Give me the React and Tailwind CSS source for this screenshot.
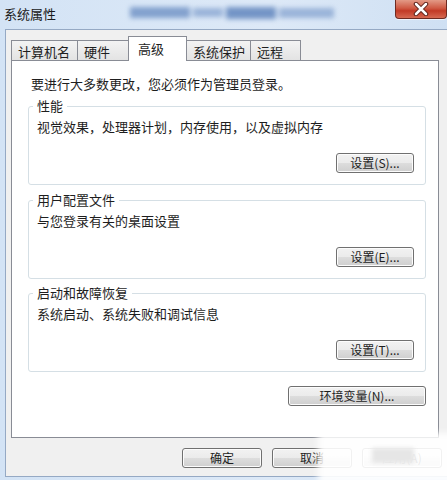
import React from "react";

const btn =
  "h-[20px] rounded-[3px] border border-[#707070] bg-[linear-gradient(#f2f2f2_0%,#ebebeb_50%,#dddddd_51%,#cfcfcf_100%)] shadow-[inset_0_0_0_1px_#fcfcfc] text-[12px] leading-[18px] text-[#1e1e1e] flex items-center justify-center";

function Group({ title, desc, button }) {
  return (
    <fieldset className="mx-[12px] ml-[16px] border border-[#d5dfe5] rounded-[3px] pl-[8px] pr-[11px] pb-[11px]">
      <legend className="px-[4px] -ml-[4px] leading-[16px]">{title}</legend>
      <div className="mt-[5px] leading-[16px]">{desc}</div>
      <div className="mt-[18px] flex justify-end">
        <div className={btn + " w-[78px]"}>{button}</div>
      </div>
    </fieldset>
  );
}

export default function App() {
  const tabs = [
    { label: "计算机名", w: "w-[67px]" },
    { label: "硬件", w: "w-[52px] -ml-px" },
    { label: "高级", w: "w-[59px] -ml-px", active: true },
    { label: "系统保护", w: "w-[65px] -ml-px" },
    { label: "远程", w: "w-[51px] -ml-px" },
  ];

  return (
    <div className="w-[447px] h-[480px] relative overflow-hidden bg-[linear-gradient(90deg,#d3e3f5,#dde9f7_60%,#cfe0f3)] text-[13px] text-[#1e1e1e] font-['Noto_Sans_CJK_SC',sans-serif]">
      {/* Title bar */}
      <div className="h-[29px] flex items-start">
        <span className="ml-[4px] mt-[5px] leading-[18px] text-[13px] text-[#1a1a1a]">系统属性</span>
        {/* blurred caption */}
        <div className="ml-[74px] mt-[5px] w-[208px] h-[15px] flex items-center gap-[3px] blur-[2.5px] opacity-80">
          <div className="w-[60px] h-[11px] bg-[#6d90c4]" />
          <div className="w-[30px] h-[9px] bg-[#8aa7d2]" />
          <div className="w-[50px] h-[12px] bg-[#5a80ba]" />
          <div className="w-[55px] h-[10px] bg-[#8aa7d2]" />
        </div>
        <div className="ml-auto w-[52px] h-[19px] rounded-b-[4px] border border-t-0 border-[#6e2b22] bg-[linear-gradient(#e39a86,#cf5a44_45%,#c23a26_60%,#d66a52)] flex items-center justify-center shadow-[0_1px_0_#ffffff99]">
          <svg width="16" height="14" viewBox="0 0 16 14">
            <path d="M3 2 L13 12 M13 2 L3 12" stroke="#5a2018" strokeWidth="4.5" strokeLinecap="round" />
            <path d="M3 2 L13 12 M13 2 L3 12" stroke="#ffffff" strokeWidth="2.5" strokeLinecap="round" />
          </svg>
        </div>
      </div>

      {/* Client area */}
      <div className="ml-[5px] h-[448px] bg-[#f0f0f0] border-l border-t border-b border-[#95a9c4] flex flex-col">
        {/* Tabs */}
        <div className="mt-[6px] pl-[5px] flex items-end relative z-10 -mb-px">
          {tabs.map((t) =>
            t.active ? (
              <div
                key={t.label}
                className={t.w + " h-[25px] bg-white border border-b-0 border-[#898c95] pl-[9px] flex items-center leading-[16px]"}
              >
                {t.label}
              </div>
            ) : (
              <div
                key={t.label}
                className={t.w + " h-[21px] bg-[linear-gradient(#f3f3f3,#e3e3e3)] border border-[#898c95] pl-[6px] pt-[2px] flex items-center leading-[16px]"}
              >
                {t.label}
              </div>
            )
          )}
        </div>

        {/* Panel */}
        <div className="ml-[5px] w-[428px] h-[378px] bg-white border border-[#898c95] flex flex-col">
          <div className="pt-[15px] pl-[19px] leading-[16px]">要进行大多数更改，您必须作为管理员登录。</div>
          <div className="mt-[6px]">
            <Group title="性能" desc="视觉效果，处理器计划，内存使用，以及虚拟内存" button="设置(S)..." />
          </div>
          <div className="mt-[7px]">
            <Group title="用户配置文件" desc="与您登录有关的桌面设置" button="设置(E)..." />
          </div>
          <div className="mt-[6px]">
            <Group title="启动和故障恢复" desc="系统启动、系统失败和调试信息" button="设置(T)..." />
          </div>
          <div className="mt-[14px] mr-[12px] flex justify-end">
            <div className={btn + " w-[138px]"}>环境变量(N)...</div>
          </div>
        </div>

        {/* Bottom buttons */}
        <div className="mt-[10px] pr-[5px] flex justify-end gap-[10px]">
          <div className={btn + " w-[80px]"}>确定</div>
          <div className={btn + " w-[80px]"}>取消</div>
          <div className={btn + " w-[80px]"}>应用(A)</div>
        </div>
      </div>

      {/* Watermark overlay */}
      <div className="absolute left-[318px] top-[433px] w-[140px] h-[52px] bg-white/90 blur-[3px]" />
      <div className="absolute left-[372px] top-[448px] w-[42px] h-[15px] bg-[#e6e6e6] blur-[2px]" />
    </div>
  );
}
